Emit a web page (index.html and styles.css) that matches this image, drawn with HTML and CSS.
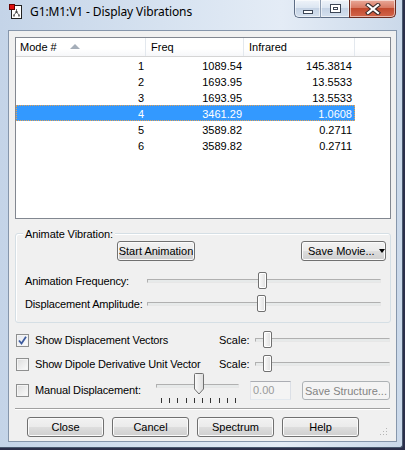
FILE: index.html
```html
<!DOCTYPE html>
<html>
<head>
<meta charset="utf-8">
<link rel="stylesheet" href="styles.css">
</head>
<body>
<div class="window">
  <div class="titlebar">
    <svg class="appicon" width="14" height="15" viewBox="0 0 14 15">
      <rect x="2.5" y="1.5" width="10" height="13" fill="#fff" stroke="#222"/>
      <line x1="7.5" y1="5" x2="7.5" y2="8" stroke="#666"/>
      <line x1="7.5" y1="8" x2="5" y2="11" stroke="#666"/>
      <line x1="7.5" y1="8" x2="10" y2="11" stroke="#666"/>
      <rect x="6.5" y="7" width="2" height="2" fill="#444"/>
      <rect x="4" y="10.5" width="2" height="2" fill="#777"/>
      <rect x="9" y="10.5" width="2" height="2" fill="#777"/>
      <rect x="0.5" y="0.5" width="5" height="5" fill="#e01010" stroke="#600"/>
    </svg>
    <span class="title">G1:M1:V1 - Display Vibrations</span>
    <div class="caption">
      <div class="cap-btn cap-min"><span class="min-glyph"></span></div>
      <div class="cap-btn cap-max"><span class="max-glyph"></span></div>
      <div class="cap-btn cap-close">
        <svg width="16" height="12" viewBox="0 0 16 12">
          <path d="M3 2 L13 10 M13 2 L3 10" stroke="#3a2a2a" stroke-width="4.2" stroke-linecap="square"/>
          <path d="M3 2 L13 10 M13 2 L3 10" stroke="#fff" stroke-width="2.2" stroke-linecap="square"/>
        </svg>
      </div>
    </div>
  </div>
  <div class="client">
    <div class="list">
      <div class="lv-header">
        <div class="hcell c1">Mode #<span class="sort"></span></div>
        <div class="hcell c2">Freq</div>
        <div class="hcell c3">Infrared</div>
        <div class="hcell c4"></div>
      </div>
      <div class="row"><span class="cell c1">1</span><span class="cell c2">1089.54</span><span class="cell c3">145.3814</span></div>
      <div class="row"><span class="cell c1">2</span><span class="cell c2">1693.95</span><span class="cell c3">13.5533</span></div>
      <div class="row"><span class="cell c1">3</span><span class="cell c2">1693.95</span><span class="cell c3">13.5533</span></div>
      <div class="row selected"><span class="cell c1">4</span><span class="cell c2">3461.29</span><span class="cell c3">1.0608</span></div>
      <div class="row"><span class="cell c1">5</span><span class="cell c2">3589.82</span><span class="cell c3">0.2711</span></div>
      <div class="row"><span class="cell c1">6</span><span class="cell c2">3589.82</span><span class="cell c3">0.2711</span></div>
    </div>

    <div class="group">
      <div class="group-title">Animate Vibration:</div>
      <div class="anim-buttons">
        <div class="btn btn-start">Start Animation</div>
        <div class="btn btn-movie">Save Movie...<span class="drop"></span></div>
      </div>
      <div class="slider-row">
        <span class="slabel">Animation Frequency:</span>
        <div class="track-area"><div class="track"></div><div class="thumb" style="left:111px"></div></div>
      </div>
      <div class="slider-row second">
        <span class="slabel">Displacement Amplitude:</span>
        <div class="track-area"><div class="track"></div><div class="thumb" style="left:110px"></div></div>
      </div>
    </div>

    <div class="opt-row first">
      <label class="chk-label"><span class="chk checked"><svg width="9" height="9" viewBox="0 0 9 9"><path d="M1 4.5 L3.5 7.5 L8 0.8" fill="none" stroke="#3d5b9e" stroke-width="1.8"/></svg></span>Show Displacement Vectors</label>
      <span class="scale">Scale:</span>
      <div class="track-area"><div class="track"></div><div class="thumb" style="left:8px"></div></div>
    </div>
    <div class="opt-row">
      <label class="chk-label"><span class="chk"></span>Show Dipole Derivative Unit Vector</label>
      <span class="scale">Scale:</span>
      <div class="track-area"><div class="track"></div><div class="thumb" style="left:8px"></div></div>
    </div>
    <div class="manual-row">
      <label class="chk-label manual"><span class="chk"></span>Manual Displacement:</label>
      <div class="manual-slider">
        <div class="track"></div>
        <svg class="pthumb" style="left:38px" width="10" height="22" viewBox="0 0 10 22">
          <defs><linearGradient id="tg" x1="0" y1="0" x2="1" y2="0"><stop offset="0" stop-color="#fbfbfb"/><stop offset="1" stop-color="#dcdcdc"/></linearGradient></defs>
          <path d="M0.5 1.5 Q0.5 0.5 1.5 0.5 H8.5 Q9.5 0.5 9.5 1.5 V16 L5 21 L0.5 16 Z" fill="url(#tg)" stroke="#707070"/>
        </svg>
        <div class="ticks"><i></i><i></i><i></i><i></i><i></i><i></i><i></i><i></i><i></i><i></i></div>
      </div>
      <div class="textbox">0.00</div>
      <div class="btn disabled btn-save">Save Structure...</div>
    </div>
    <div class="separator"></div>
    <div class="bottom-buttons">
      <div class="btn">Close</div>
      <div class="btn">Cancel</div>
      <div class="btn">Spectrum</div>
      <div class="btn">Help</div>
    </div>
    <div class="grip">
      <svg width="8" height="8" viewBox="0 0 8 8">
        <rect x="6" y="0" width="1" height="1" fill="#b5b5b5"/>
        <rect x="3" y="3" width="1" height="1" fill="#b5b5b5"/>
        <rect x="6" y="3" width="1" height="1" fill="#b5b5b5"/>
        <rect x="0" y="6" width="1" height="1" fill="#b5b5b5"/>
        <rect x="3" y="6" width="1" height="1" fill="#b5b5b5"/>
        <rect x="6" y="6" width="1" height="1" fill="#b5b5b5"/>
      </svg>
    </div>
  </div>
</div>
</body>
</html>
```
FILE: styles.css
```css
* { box-sizing: border-box; }
html, body { margin: 0; padding: 0; }
body {
  width: 405px;
  height: 450px;
  overflow: hidden;
  background: #2b2f4a;
  font-family: "Liberation Sans", Arial, sans-serif;
  font-size: 11px;
  color: #000;
}
.window {
  width: 403px;
  height: 448px;
  display: flex;
  flex-direction: column;
  padding: 0 5px 5px 8px;
  border-right: 1px solid #4a5a70;
  border-bottom: 1px solid #4a5a70;
  border-bottom-right-radius: 3px;
  background: linear-gradient(90deg, #c4d4e8 0%, #d6e2f0 40%, #e4ecf6 70%, #cbd9ea 100%);
}
.titlebar {
  height: 30px;
  flex: none;
  display: flex;
  align-items: flex-start;
  margin-left: -8px;
  padding-left: 9px;
}
.appicon { margin-top: 4px; flex: none; }
.title {
  font-family: "Noto Sans", "Open Sans", sans-serif;
  font-size: 12px;
  margin-left: 7px;
  margin-top: 3px;
  line-height: 17px;
  color: #000;
  letter-spacing: -0.1px;
  white-space: nowrap;
}
.caption {
  margin-left: auto;
  margin-right: 1px;
  display: flex;
  height: 18px;
}
.cap-btn {
  height: 18px;
  border: 1px solid #5d6d85;
  border-top: none;
  display: flex;
  align-items: center;
  justify-content: center;
  box-shadow: inset 0 0 0 1px rgba(255,255,255,0.55);
}
.cap-min {
  width: 26px;
  border-bottom-left-radius: 5px;
  border-right: none;
  background: linear-gradient(#eef3f9 0%, #dce6f2 45%, #c5d3e5 50%, #d5e1ef 100%);
}
.cap-max {
  width: 29px;
  border-right: none;
  background: linear-gradient(#eef3f9 0%, #dce6f2 45%, #c5d3e5 50%, #d5e1ef 100%);
  border-left: 1px solid #8c9bb0;
}
.cap-close {
  width: 47px;
  border-bottom-right-radius: 5px;
  border-color: #6b2b20;
  background: linear-gradient(#e9a99a 0%, #d87a64 45%, #c24a2f 50%, #d3664b 100%);
}
.min-glyph {
  width: 10px;
  height: 4px;
  margin-top: 6px;
  background: #fff;
  border: 1px solid #3c4656;
}
.max-glyph {
  width: 11px;
  height: 9px;
  border: 1px solid #3c4656;
  background: #fff;
  box-shadow: inset 0 0 0 2px #fff, inset 0 0 0 3px #3c4656;
}
.client {
  flex: 1;
  position: relative;
  background: #f0f0f0;
  border: 1px solid #8696ab;
  padding: 6px 5px 0 6px;
}
/* list view */
.list {
  height: 182px;
  border: 1px solid #828790;
  background: #fff;
}
.lv-header {
  display: flex;
  height: 19px;
  border-bottom: 1px solid #d5d5d5;
  background: linear-gradient(#ffffff 0%, #ffffff 60%, #f6f7f9 100%);
}
.hcell {
  display: flex;
  align-items: center;
  padding-left: 5px;
  border-right: 1px solid #e3e8ee;
  color: #000;
}
.hcell.c1 { padding-left: 4px; }
.c1 { width: 130px; flex: none; }
.c2 { width: 98px; flex: none; }
.c3 { width: 111px; flex: none; }
.c4 { flex: 1; border-right: none; }
.sort {
  width: 0;
  height: 0;
  margin-left: 13px;
  margin-top: -2px;
  border-left: 5px solid transparent;
  border-right: 5px solid transparent;
  border-bottom: 5px solid #a5aeb9;
}
.row {
  display: flex;
  width: 339px;
  height: 16px;
  line-height: 16px;
  border: 1px solid transparent;
}
.cell {
  text-align: right;
  padding-right: 2px;
}
.row .c1 { width: 129px; }
.row .c3 { width: 110px; }
.row.selected {
  background: #3399ff;
  color: #fff;
  border: 1px dotted #e9a24f;
}
/* group */
.group {
  margin-top: 14px;
  height: 90px;
  border: 1px solid #d5dfe5;
  border-radius: 3px;
  box-shadow: inset 1px 1px 0 #fff;
  padding: 0 4px 0 9px;
}
.group-title {
  margin-top: -7px;
  margin-left: -2px;
  padding: 0 2px;
  line-height: 14px;
  height: 14px;
  background: #f0f0f0;
  width: max-content;
  letter-spacing: -0.1px;
}
.anim-buttons {
  display: flex;
  justify-content: space-between;
  padding-left: 92px;
}
.btn {
  height: 20px;
  width: 77px;
  display: flex;
  align-items: center;
  justify-content: center;
  border: 1px solid #707070;
  border-radius: 3px;
  background: linear-gradient(#f2f2f2 0%, #ebebeb 48%, #dddddd 52%, #cfcfcf 100%);
  box-shadow: inset 0 0 0 1px #fbfbfb;
  color: #000;
}
.btn-start { width: 78px; }
.btn-movie { width: 85px; justify-content: flex-start; padding-left: 6px; }
.drop {
  margin-left: 4px;
  width: 0; height: 0;
  border-left: 3.5px solid transparent;
  border-right: 3.5px solid transparent;
  border-top: 4px solid #000;
}
.slider-row {
  display: flex;
  align-items: center;
  height: 18px;
  margin-top: 11px;
}
.slider-row.second { margin-top: 5px; }
.slabel { width: 122px; flex: none; letter-spacing: -0.15px; }
.track-area {
  position: relative;
  flex: 1;
  height: 18px;
  display: flex;
  align-items: center;
}
.slider-row .track-area { margin-right: 5px; }
.track {
  width: 100%;
  height: 4px;
  border: 1px solid;
  border-color: #b0b0b0 #e7e7e7 #e7e7e7 #b0b0b0;
  background: #e7eaea;
}
.thumb {
  position: absolute;
  top: 0;
  width: 9px;
  height: 17px;
  border: 1px solid #707070;
  border-radius: 2px;
  background: linear-gradient(90deg, #fbfbfb, #dedede);
  box-shadow: inset 0 0 0 1px #fff;
}
/* options */
.opt-row {
  display: flex;
  align-items: center;
  height: 18px;
  margin-top: 6px;
}
.opt-row.first { margin-top: 8px; }
.chk-label {
  width: 204px;
  flex: none;
  display: flex;
  align-items: center;
  padding-left: 1px;
  letter-spacing: -0.15px;
  white-space: nowrap;
}
.chk {
  width: 13px;
  height: 13px;
  flex: none;
  margin-right: 6px;
  border: 1px solid #8e8f8f;
  background: linear-gradient(135deg, #dcdcdc, #fcfcfc);
  box-shadow: inset 0 0 0 1px #f4f4f4;
  display: flex;
  align-items: center;
  justify-content: center;
}
.chk.checked { background: linear-gradient(135deg, #e4e7ee, #fdfdfd); }
.scale { width: 36px; flex: none; }
.opt-row .track-area { margin-right: 1px; }
.manual-row {
  display: flex;
  align-items: flex-start;
  height: 32px;
}
.chk-label.manual {
  width: 141px;
  height: 18px;
  margin-top: 8px;
}
.manual-slider {
  position: relative;
  width: 83px;
  height: 32px;
}
.manual-slider .track {
  position: relative;
  top: 11px;
}
.pthumb { position: absolute; top: 0; }
.ticks {
  position: absolute;
  left: 5px;
  right: 3px;
  top: 25px;
  display: flex;
  justify-content: space-between;
}
.ticks i {
  display: block;
  width: 1px;
  height: 5px;
  background: #333;
}
.textbox {
  margin-top: 8px;
  margin-left: 11px;
  width: 41px;
  height: 19px;
  border: 1px solid #abadb3;
  border-color: #abadb3 #dbdfe6 #e3e9ef #e2e3ea;
  background: #f4f4f4;
  color: #9a9a9a;
  line-height: 17px;
  padding-left: 2px;
}
.btn.btn-save {
  margin-top: 8px;
  margin-left: 11px;
  width: 88px;
  height: 19px;
}
.btn.disabled {
  border-color: #adb2b5;
  background: #f4f4f4;
  box-shadow: none;
  color: #838383;
}
.separator {
  margin-top: 3px;
  height: 2px;
  border-top: 1px solid #a0a0a0;
  border-bottom: 1px solid #fff;
  margin-right: 1px;
}
.bottom-buttons {
  display: flex;
  gap: 8px;
  margin-top: 7px;
  padding-left: 12px;
}
.grip {
  position: absolute;
  right: 8px;
  bottom: 5px;
  width: 8px;
  height: 8px;
  display: flex;
}
```
